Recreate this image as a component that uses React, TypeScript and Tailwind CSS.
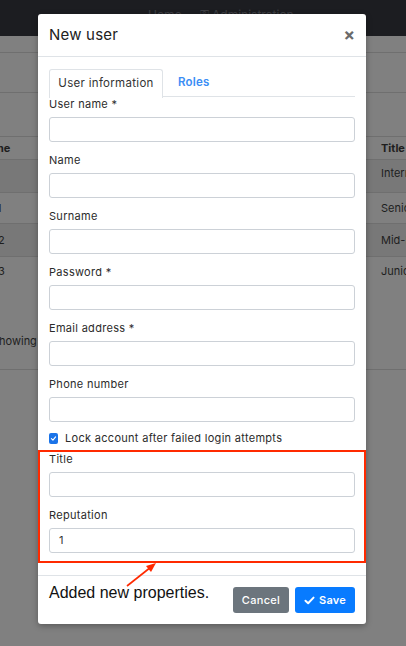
import React from "react";

const Field = ({ label, value, last }: { label: string; value?: string; last?: boolean }) => (
  <div className={last ? "flex flex-col" : "flex flex-col mb-[11px]"}>
    <label className="text-[11px] leading-[14px] tracking-[0.3px] text-[#2b2b2b] mb-[6px]">{label}</label>
    <div className="h-[25px] border-[1.5px] border-[#ccd1d7] rounded-[3px] flex items-center px-[9px] text-[11px] text-[#333]">
      {value}
    </div>
  </div>
);

const RightCell = ({ children, bold }: { children: React.ReactNode; bold?: boolean }) => (
  <div className={"ml-auto w-[25px] overflow-hidden whitespace-nowrap " + (bold ? "font-bold" : "")}>{children}</div>
);

export default function App() {
  const font = { fontFamily: "Inter, 'Noto Sans', sans-serif" };
  return (
    <div className="relative w-[406px] h-[646px] overflow-hidden bg-[#808080]" style={font}>
      {/* background page (dimmed) */}
      <div className="h-[36px] bg-[#1c1d21] flex items-start pt-[6px] pl-[148px] gap-[18px] text-[12px] text-[#3c3d42]">
        <span>Home</span>
        <span>⚿ Administration</span>
      </div>
      <div className="h-[17px] border-b border-[#6f6f6f]" />
      <div className="h-[40px] border-b border-[#6f6f6f]" />
      <div className="h-[44px] border-b border-[#6f6f6f]" />
      <div className="h-[23px] border-b border-[#6f6f6f] flex items-center text-[11px] text-[#1e1e1e]">
        <span className="-ml-[21px] font-bold whitespace-nowrap">Name</span>
        <RightCell bold>Title</RightCell>
      </div>
      <div className="h-[33px] border-b border-[#6f6f6f] bg-[#787878] flex items-start pt-[5px] text-[11px] text-[#1e1e1e]">
        <RightCell>Intern</RightCell>
      </div>
      <div className="h-[31px] border-b border-[#6f6f6f] flex items-center text-[11px] text-[#1e1e1e]">
        <span className="-ml-[3px]">1</span>
        <RightCell>Senior</RightCell>
      </div>
      <div className="h-[33px] border-b border-[#6f6f6f] bg-[#787878] flex items-center text-[11px] text-[#1e1e1e]">
        <span className="-ml-[2px]">2</span>
        <RightCell>Mid-level</RightCell>
      </div>
      <div className="h-[113px] border-b border-[#6f6f6f] flex flex-col justify-between text-[11px] text-[#1e1e1e] pt-[6px] pb-[20px]">
        <div className="flex">
          <span className="-ml-[2px]">3</span>
          <RightCell>Junior</RightCell>
        </div>
        <span className="-ml-[8px]">Showing</span>
      </div>

      {/* modal */}
      <div className="absolute left-[38px] top-[14px] w-[328px] bg-white rounded-[3px] shadow-[0_2px_6px_rgba(0,0,0,0.3)]">
        <div className="h-[43px] flex items-center justify-between px-[11px] border-b-[1.5px] border-[#dfe3e7]">
          <span className="text-[15px] text-[#212121] tracking-[0.2px]">New user</span>
          <span className="text-[17px] font-bold text-[#6a6a6a] leading-none">×</span>
        </div>
        <div className="px-[11px] pt-[12px] pb-[12px]">
          <div className="flex h-[28px] border-b-[1.5px] border-[#dfe3e7]">
            <div className="w-[114px] border-[1.5px] border-b-0 border-[#dfe3e7] rounded-t-[3px] bg-white mb-[-1.5px] flex items-center justify-center text-[11.5px] text-[#333] tracking-[0.3px]">
              User information
            </div>
            <div className="flex items-center pl-[15px] text-[11.5px] font-semibold text-[#3b8ef5] tracking-[0.2px]">Roles</div>
          </div>
          <Field label="User name *" />
          <Field label="Name" />
          <Field label="Surname" />
          <Field label="Password *" />
          <Field label="Email address *" />
          <Field label="Phone number" />
          <div className="flex items-center h-[11px] gap-[7px]">
            <div className="w-[9px] h-[11px] rounded-[2px] bg-[#1a73e8] flex items-center justify-center">
              <svg width="7" height="7" viewBox="0 0 10 10">
                <path d="M2 5.2 L4.2 7.2 L8 2.8" stroke="white" strokeWidth="1.6" fill="none" strokeLinecap="round" strokeLinejoin="round" />
              </svg>
            </div>
            <span className="text-[11px] text-[#2b2b2b] tracking-[0.3px]">Lock account after failed login attempts</span>
          </div>
          <div className="mt-[6px] -mx-[11px] px-[9px] pb-[8px] border-2 border-[#ff2a00]">
            <Field label="Title" />
            <Field label="Reputation" value="1" last />
          </div>
        </div>
        <div className="h-[49px] border-t-[1.5px] border-[#dfe3e7] flex items-center px-[11px]">
          <span className="text-[16px] text-[#111] mt-[-14px]" style={{ fontFamily: "'Liberation Sans', Arial, sans-serif" }}>
            Added new properties.
          </span>
          <div className="ml-auto flex gap-[6px]">
            <button className="w-[56px] h-[26px] rounded-[3px] bg-[#6c757d] text-white text-[11px] font-medium tracking-[0.3px]">Cancel</button>
            <button className="w-[60px] h-[26px] rounded-[3px] bg-[#087bff] text-white text-[11px] font-semibold tracking-[0.2px] flex items-center justify-center gap-[4px]">
              <svg width="11" height="9" viewBox="0 0 12 10">
                <path d="M1.5 5.2 L4.5 8 L10.5 1.8" stroke="white" strokeWidth="2.2" fill="none" strokeLinecap="round" strokeLinejoin="round" />
              </svg>
              Save
            </button>
          </div>
        </div>
      </div>

      {/* annotation arrow */}
      <svg className="absolute left-0 top-0" width="406" height="646" viewBox="0 0 406 646">
        <line x1="127" y1="586" x2="151" y2="567" stroke="#ff2a00" strokeWidth="1.6" />
        <polygon points="156,563 146,566 151,572" fill="#ff2a00" />
      </svg>
    </div>
  );
}
